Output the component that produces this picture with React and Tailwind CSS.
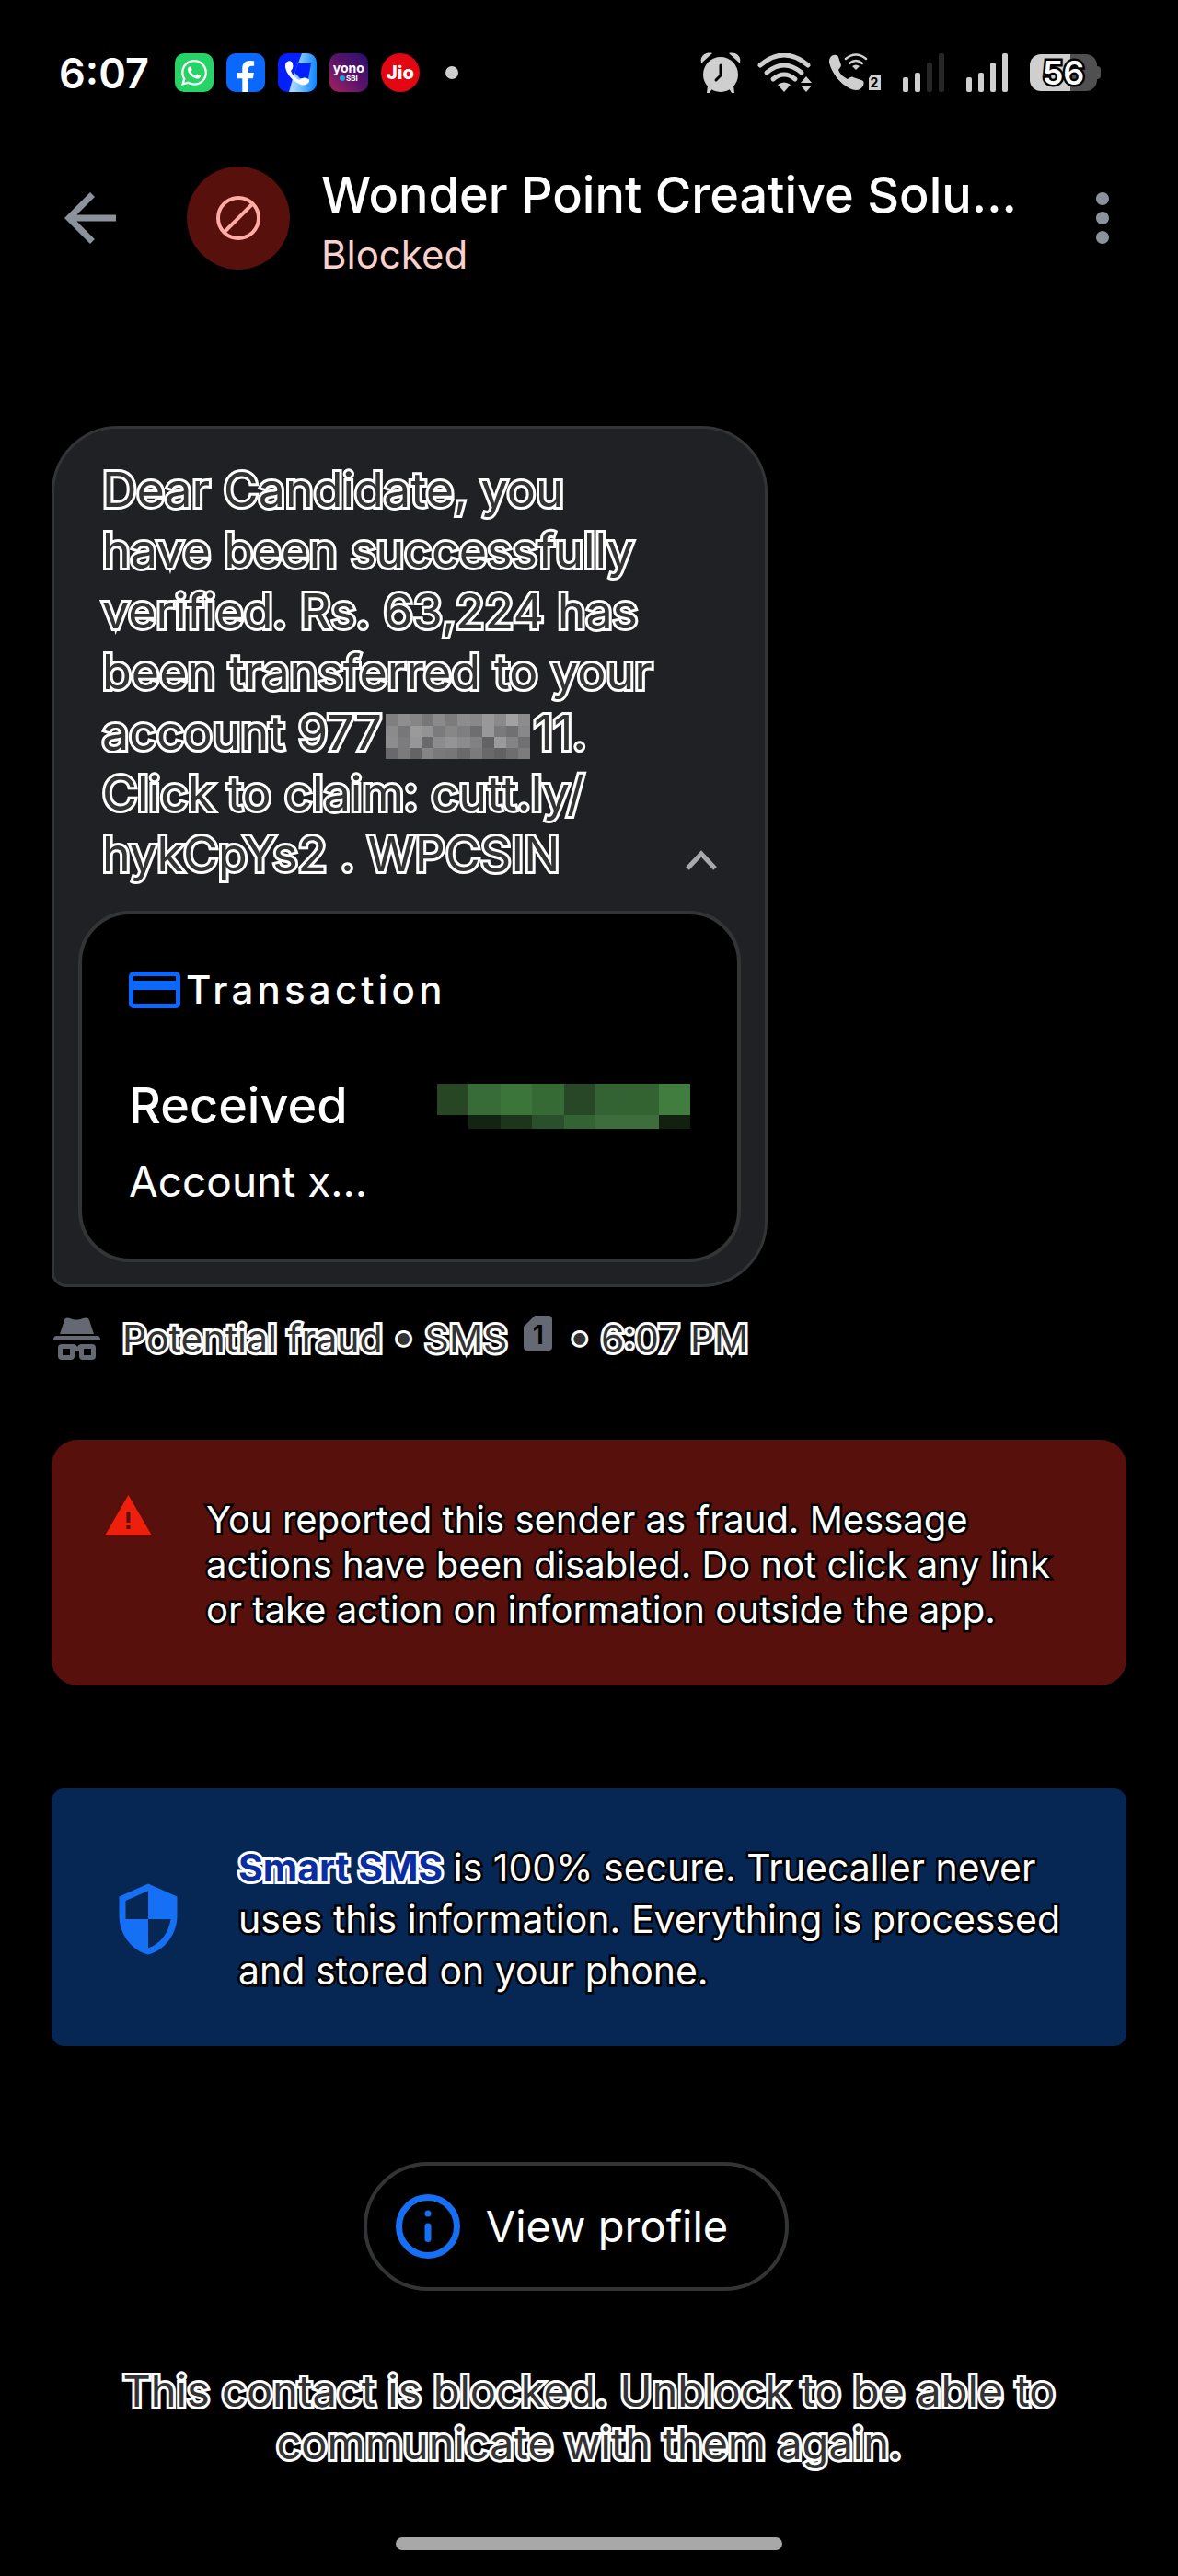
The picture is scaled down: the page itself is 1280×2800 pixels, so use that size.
import { FaFacebookF, FaWhatsapp } from 'react-icons/fa';
import { MdArrowBack, MdMoreVert, MdSecurity } from 'react-icons/md';
import { clsx } from 'clsx';

const OUTLINE_LIGHT = 'text-[#333] [-webkit-text-stroke:6px_#fff] [paint-order:stroke_fill]';
const OUTLINE_DARK = 'text-white [-webkit-text-stroke:5px_#000] [paint-order:stroke_fill]';

const accountMask = [
  ['#7f7f80', '#8e8e8f', '#868687', '#77777a', '#8a8a8b', '#7c7c7d', '#8d8d8e', '#88888a', '#989899', '#8a8a8c', '#a2a2a3', '#8c8c8e'],
  ['#8b8b8c', '#77777a', '#9a9a9b', '#939394', '#7b7b7d', '#878788', '#7e7e80', '#6e6e70', '#98989a', '#7a7a7c', '#707073', '#88888a'],
  ['#8d8d8f', '#7c7c7e', '#979799', '#69696b', '#8c8c8e', '#949496', '#8b8b8d', '#818183', '#626265', '#9a9a9c', '#848486', '#707073'],
  ['#69696b', '#7b7b7d', '#646467', '#858587', '#7a7a7c', '#77777a', '#6a6a6d', '#7b7b7d', '#69696c', '#626265', '#6e6e70', '#7c7c7e'],
];

const amountMask = {
  top: ['#264624', '#376b37', '#3b7539', '#366a35', '#284727', '#336332', '#346332', '#407d3f'],
  bottom: ['#000000', '#142413', '#1c351b', '#29502a', '#336332', '#3c6d3a', '#3c6d3a', '#11200f'],
};

function AlarmIcon() {
  return (
    <svg viewBox="0 0 44 44" className="size-11" aria-hidden>
      <g fill="#cfcfcf">
        <circle cx="22" cy="24" r="19" />
        <path d="M1 11C-1 4 6-1 13 1L2 11zM43 11C45 4 38-1 31 1l11 10z" />
        <path d="M8 36l5 3-3 5H7zM36 36l-5 3 3 5h3z" />
      </g>
      <path d="M22 14v11l-5 5" fill="none" stroke="#000" strokeWidth="3" strokeLinecap="round" />
    </svg>
  );
}

function WifiIcon() {
  return (
    <svg viewBox="0 0 60 42" className="h-[42px] w-[60px]" aria-hidden>
      <g fill="none" stroke="#cfcfcf" strokeWidth="5" strokeLinecap="round">
        <path d="M3 13Q29-9 55 13" />
        <path d="M10 21Q29 5 48 21" />
        <path d="M17 28Q29 18 41 28" />
      </g>
      <path d="M22 34q7-5 14 0l-7 8z" fill="#cfcfcf" />
      <path d="M47 32l6-7 6 7zM47 35h12l-6 7z" fill="#cfcfcf" />
    </svg>
  );
}

function WifiCallIcon() {
  return (
    <svg viewBox="0 0 56 42" className="h-[42px] w-14" aria-hidden>
      <path
        d="M1 5C3 1 9 1 10 4l3 9c0 2-2 3-3 5 2 5 6 8 10 10 3-2 4-3 6-2l9 3c3 1 3 3 2 6-3 6-9 6-15 3C12 33 3 22 0 10c0-2 0-4 1-5z"
        fill="#cfcfcf"
      />
      <g fill="none" stroke="#cfcfcf" strokeWidth="2.5" strokeLinecap="round">
        <path d="M18 6q11-9 22 0" />
        <path d="M22 11q7-6 14 0" />
      </g>
      <path d="M25 14q4-3 8 0l-4 4z" fill="#cfcfcf" />
      <path d="M46 23h10v17H43V27z" fill="#cfcfcf" />
      <text x="49" y="37" textAnchor="middle" fontSize="14" fontWeight="700" fontFamily="Inter, sans-serif">2</text>
    </svg>
  );
}

function SignalIcon({ level }) {
  const bars = [16, 21, 32, 42];
  return (
    <svg viewBox="0 0 45 42" className="h-[42px] w-[45px]" aria-hidden>
      {bars.map((h, i) => (
        <rect key={h} x={i * 13} y={42 - h} width="6" height={h} rx="2" fill={i < level ? '#cfcfcf' : '#262626'} />
      ))}
    </svg>
  );
}

function Battery() {
  return (
    <div className="flex items-center">
      <div className="flex h-10 w-[73px] items-center justify-center rounded-xl bg-linear-to-r from-[#cfcfcf] from-60% to-[#505050] to-60%">
        <span className="text-[36px] leading-10 font-semibold text-white [-webkit-text-stroke:5px_#000] [paint-order:stroke_fill]">
          56
        </span>
      </div>
      <div className="h-3.5 w-1 rounded-r-sm bg-[#505050]" />
    </div>
  );
}

function DialerAppIcon() {
  return (
    <svg viewBox="0 0 42 42" className="size-[42px] rounded-[10px]" aria-hidden>
      <defs>
        <linearGradient id="dialer" x1="0" y1="0.5" x2="1" y2="0.6">
          <stop offset="0.2" stopColor="#a5d8ff" />
          <stop offset="1" stopColor="#0a84ff" />
        </linearGradient>
      </defs>
      <path d="M0 0h42v42H0z" fill="#0420ff" />
      <path d="M26 0h16v42H12l5-18z" fill="url(#dialer)" />
      <path d="M22 11h14l-3 17-9-1-6-6z" fill="#0420ff" />
      <path
        d="M9 10c3-3 6-2 7 1 1 4 0 6-2 8 2 5 5 8 9 10 3-2 5-3 8-2 4 1 4 4 1 6-3 2-7 2-11-1C14 28 9 21 8 15c0-2 0-4 1-5z"
        fill="#fff"
      />
    </svg>
  );
}

function StatusBar() {
  return (
    <div className="flex h-[158px] items-center justify-between pr-[84px] pl-16">
      <div className="flex items-center gap-3.5">
        <span className="mr-3.5 text-[45px] leading-none font-semibold">6:07</span>
        <span className="flex size-[42px] items-center justify-center rounded-[10px] bg-[#25d366]">
          <FaWhatsapp className="size-8" aria-hidden />
        </span>
        <span className="flex size-[42px] items-end justify-center rounded-[10px] bg-[#0b68ff]">
          <FaFacebookF className="size-[34px]" aria-hidden />
        </span>
        <DialerAppIcon />
        <span className="flex size-[42px] flex-col items-center justify-center rounded-[10px] bg-linear-to-tr from-[#a51c5c] via-[#5a126a] to-[#2a0a70]">
          <span className="text-[14px] leading-[12px] font-bold">yono</span>
          <span className="flex items-center text-[8px] leading-[10px] font-bold">
            <span className="mr-px size-1.5 rounded-full bg-[#1e9fe0]" />
            SBI
          </span>
        </span>
        <span className="flex size-[42px] items-center justify-center rounded-full bg-[#e30613] text-[20px] leading-none font-extrabold">
          Jio
        </span>
        <span className="ml-3.5 size-3.5 rounded-full bg-[#cfcfcf]" />
      </div>
      <div className="flex items-center gap-6">
        <div className="flex items-center gap-[18px]">
          <AlarmIcon />
          <WifiIcon />
          <WifiCallIcon />
        </div>
        <SignalIcon level={2} />
        <SignalIcon level={4} />
        <Battery />
      </div>
    </div>
  );
}

function Header() {
  return (
    <header className="flex h-[158px] items-center pr-10 pl-14">
      <button type="button" aria-label="Back" className="shrink-0 text-[#8b929c]">
        <MdArrowBack className="size-21" aria-hidden />
      </button>
      <div className="ml-[63px] flex size-28 shrink-0 items-center justify-center rounded-full bg-[#57100b]">
        <svg viewBox="0 0 48 48" className="size-12" fill="none" stroke="#ffaca6" strokeWidth="4" aria-hidden>
          <circle cx="24" cy="24" r="22" />
          <path d="M39 9L9 39" />
        </svg>
      </div>
      <div className="ml-[34px] min-w-0 flex-1 pt-2">
        <h1 className="text-[54px] leading-[72px] font-medium">Wonder Point Creative Solu...</h1>
        <p className="text-[42px] leading-[58px] text-[#fbcfca]">Blocked</p>
      </div>
      <button type="button" aria-label="More options" className="shrink-0 text-[#8b929c]">
        <MdMoreVert className="size-21" aria-hidden />
      </button>
    </header>
  );
}

function AccountMask() {
  return (
    <span className="mx-1 inline-flex h-[49px] w-[157px] flex-col align-middle" aria-hidden>
      {accountMask.map((row, i) => (
        <span key={i} className="flex flex-1">
          {row.map((color, j) => (
            <span key={j} className="flex-1" style={{ backgroundColor: color }} />
          ))}
        </span>
      ))}
    </span>
  );
}

function AmountMask() {
  return (
    <div className="flex h-[49px] w-[275px] flex-col" aria-hidden>
      <div className="flex h-[34px]">
        {amountMask.top.map((color, i) => (
          <span key={i} className="flex-1" style={{ backgroundColor: color }} />
        ))}
      </div>
      <div className="flex h-[15px]">
        {amountMask.bottom.map((color, i) => (
          <span key={i} className="flex-1" style={{ backgroundColor: color }} />
        ))}
      </div>
    </div>
  );
}

function TransactionCard() {
  return (
    <section className="rounded-[56px] border-4 border-[#333436] bg-black px-[51px] pt-[54px] pb-[52px]">
      <div className="flex items-center gap-1.5">
        <svg viewBox="0 0 56 40" className="h-10 w-14" aria-hidden>
          <rect x="2.5" y="2.5" width="51" height="35" rx="3" fill="none" stroke="#0b68ff" strokeWidth="5" />
          <path d="M3 10h50v10H3z" fill="#0b68ff" />
        </svg>
        <h2 className="text-[42px] leading-[56px] font-medium tracking-widest">Transaction</h2>
      </div>
      <div className="mt-[62px] flex items-center justify-between">
        <span className="text-[54px] leading-[72px] font-medium">Received</span>
        <AmountMask />
      </div>
      <p className="mt-3.5 text-[46px] leading-[64px]">Account x...</p>
    </section>
  );
}

function MessageBubble() {
  return (
    <article className="w-[778px] rounded-[72px] rounded-bl-2xl border-[3px] border-[#333436] bg-[#202124] px-[26px] pt-[34px] pb-6">
      <div className="flex items-end justify-between px-[26px]">
        <p className={clsx('text-[52px] leading-[66px] whitespace-nowrap', OUTLINE_LIGHT)}>
          Dear Candidate, you
          <br />
          have been successfully
          <br />
          verified. Rs. 63,224 has
          <br />
          been transferred to your
          <br />
          account 977
          <AccountMask />
          11.
          <br />
          Click to claim: cutt.ly/
          <br />
          hykCpYs2 . WPCSIN
        </p>
        <button type="button" aria-label="Collapse" className="mb-4 -ml-10 shrink-0">
          <svg viewBox="0 0 34 22" className="h-[22px] w-[34px]" fill="none" stroke="#a9a9ab" strokeWidth="5" aria-hidden>
            <path d="M2 20L17 4l15 16" />
          </svg>
        </button>
      </div>
      <div className="mt-7">
        <TransactionCard />
      </div>
    </article>
  );
}

function MessageMeta() {
  return (
    <div className="mt-5 flex h-[72px] items-center pl-0.5">
      <svg viewBox="0 0 51 46" className="h-[46px] w-[51px]" fill="#646974" aria-hidden>
        <path d="M7 18L12 3c1-3 3-3 6-2 5 2 9 2 14 0 3-1 6-1 7 2l5 15zM0 24q0-4 4-4h43q4 0 4 4z" />
        <path
          d="M9 29h12q4 0 5 3 1-3 5-3h11q4 0 4 4v9q0 4-4 4H32q-4 0-4-4v-6h-5v6q0 4-4 4H9q-4 0-4-4v-9q0-4 4-4zm1 5v7h8v-7zm23 0v7h8v-7z"
          fillRule="evenodd"
        />
      </svg>
      <span className={clsx('ml-6 text-[41px] leading-[56px]', OUTLINE_LIGHT)}>Potential fraud • SMS</span>
      <svg viewBox="0 0 31 38" className="mx-[18px] mb-3 h-[38px] w-[31px]" aria-hidden>
        <path d="M12 0h15q4 0 4 4v30q0 4-4 4H4q-4 0-4-4V12z" fill="#646974" />
        <text x="16" y="31" textAnchor="middle" fontSize="29" fontWeight="600" fontFamily="Inter, sans-serif">1</text>
      </svg>
      <span className={clsx('text-[41px] leading-[56px]', OUTLINE_LIGHT)}>• 6:07 PM</span>
    </div>
  );
}

function FraudNotice() {
  return (
    <section className="mt-[74px] flex items-start gap-[59px] rounded-[28px] bg-[#57100b] px-[58px] pt-[60px] pb-[58px]">
      <svg viewBox="0 0 51 44" className="h-11 w-[51px] shrink-0" aria-hidden>
        <path d="M25.500 0L51 44H0z" fill="#ee1f0c" />
        <path d="M23.500 18h4v12h-4zM23.500 33h4v4h-4z" fill="#57100b" />
      </svg>
      <p className={clsx('pt-0.5 text-[40px] leading-[49px] whitespace-nowrap', OUTLINE_DARK)}>
        You reported this sender as fraud. Message
        <br />
        actions have been disabled. Do not click any link
        <br />
        or take action on information outside the app.
      </p>
    </section>
  );
}

function SecureNotice() {
  return (
    <section className="mt-28 flex items-center gap-14 rounded-[14px] bg-[#062654] px-[63px] pt-[58px] pb-[54px]">
      <MdSecurity className="size-21 shrink-0 text-[#1570f5]" aria-hidden />
      <p className={clsx('text-[41px] leading-[56px] whitespace-nowrap', OUTLINE_DARK)}>
        <strong className="font-bold text-[#0a2ea0] [-webkit-text-stroke:6px_#fff]">Smart SMS</strong> is 100% secure.
        Truecaller never
        <br />
        uses this information. Everything is processed
        <br />
        and stored on your phone.
      </p>
    </section>
  );
}

export default function App() {
  return (
    <div className="min-h-screen bg-black font-[Inter,sans-serif] text-white">
      <StatusBar />
      <Header />
      <main className="px-14 pt-[147px]">
        <MessageBubble />
        <MessageMeta />
        <FraudNotice />
        <SecureNotice />
        <div className="mt-[126px] flex justify-center pr-7">
          <button
            type="button"
            className="flex h-[140px] items-center gap-7 rounded-full border-4 border-[#333436] pr-[62px] pl-[31px] text-[47px]"
          >
            <svg viewBox="0 0 70 70" className="size-[70px]" fill="none" stroke="#1570f5" strokeWidth="7" strokeLinecap="round" aria-hidden>
              <circle cx="35" cy="35" r="31.500" />
              <path d="M35 35v13.500M35 21v0" />
            </svg>
            View profile
          </button>
        </div>
        <p className={clsx('mt-20 text-center text-[47px] leading-[57px]', OUTLINE_LIGHT)}>
          This contact is blocked. Unblock to be able to
          <br />
          communicate with them again.
        </p>
      </main>
      <footer className="flex justify-center pt-[74px] pb-[27px]">
        <div className="h-3.5 w-[420px] rounded-full bg-[#a8a8a8]" />
      </footer>
    </div>
  );
}
